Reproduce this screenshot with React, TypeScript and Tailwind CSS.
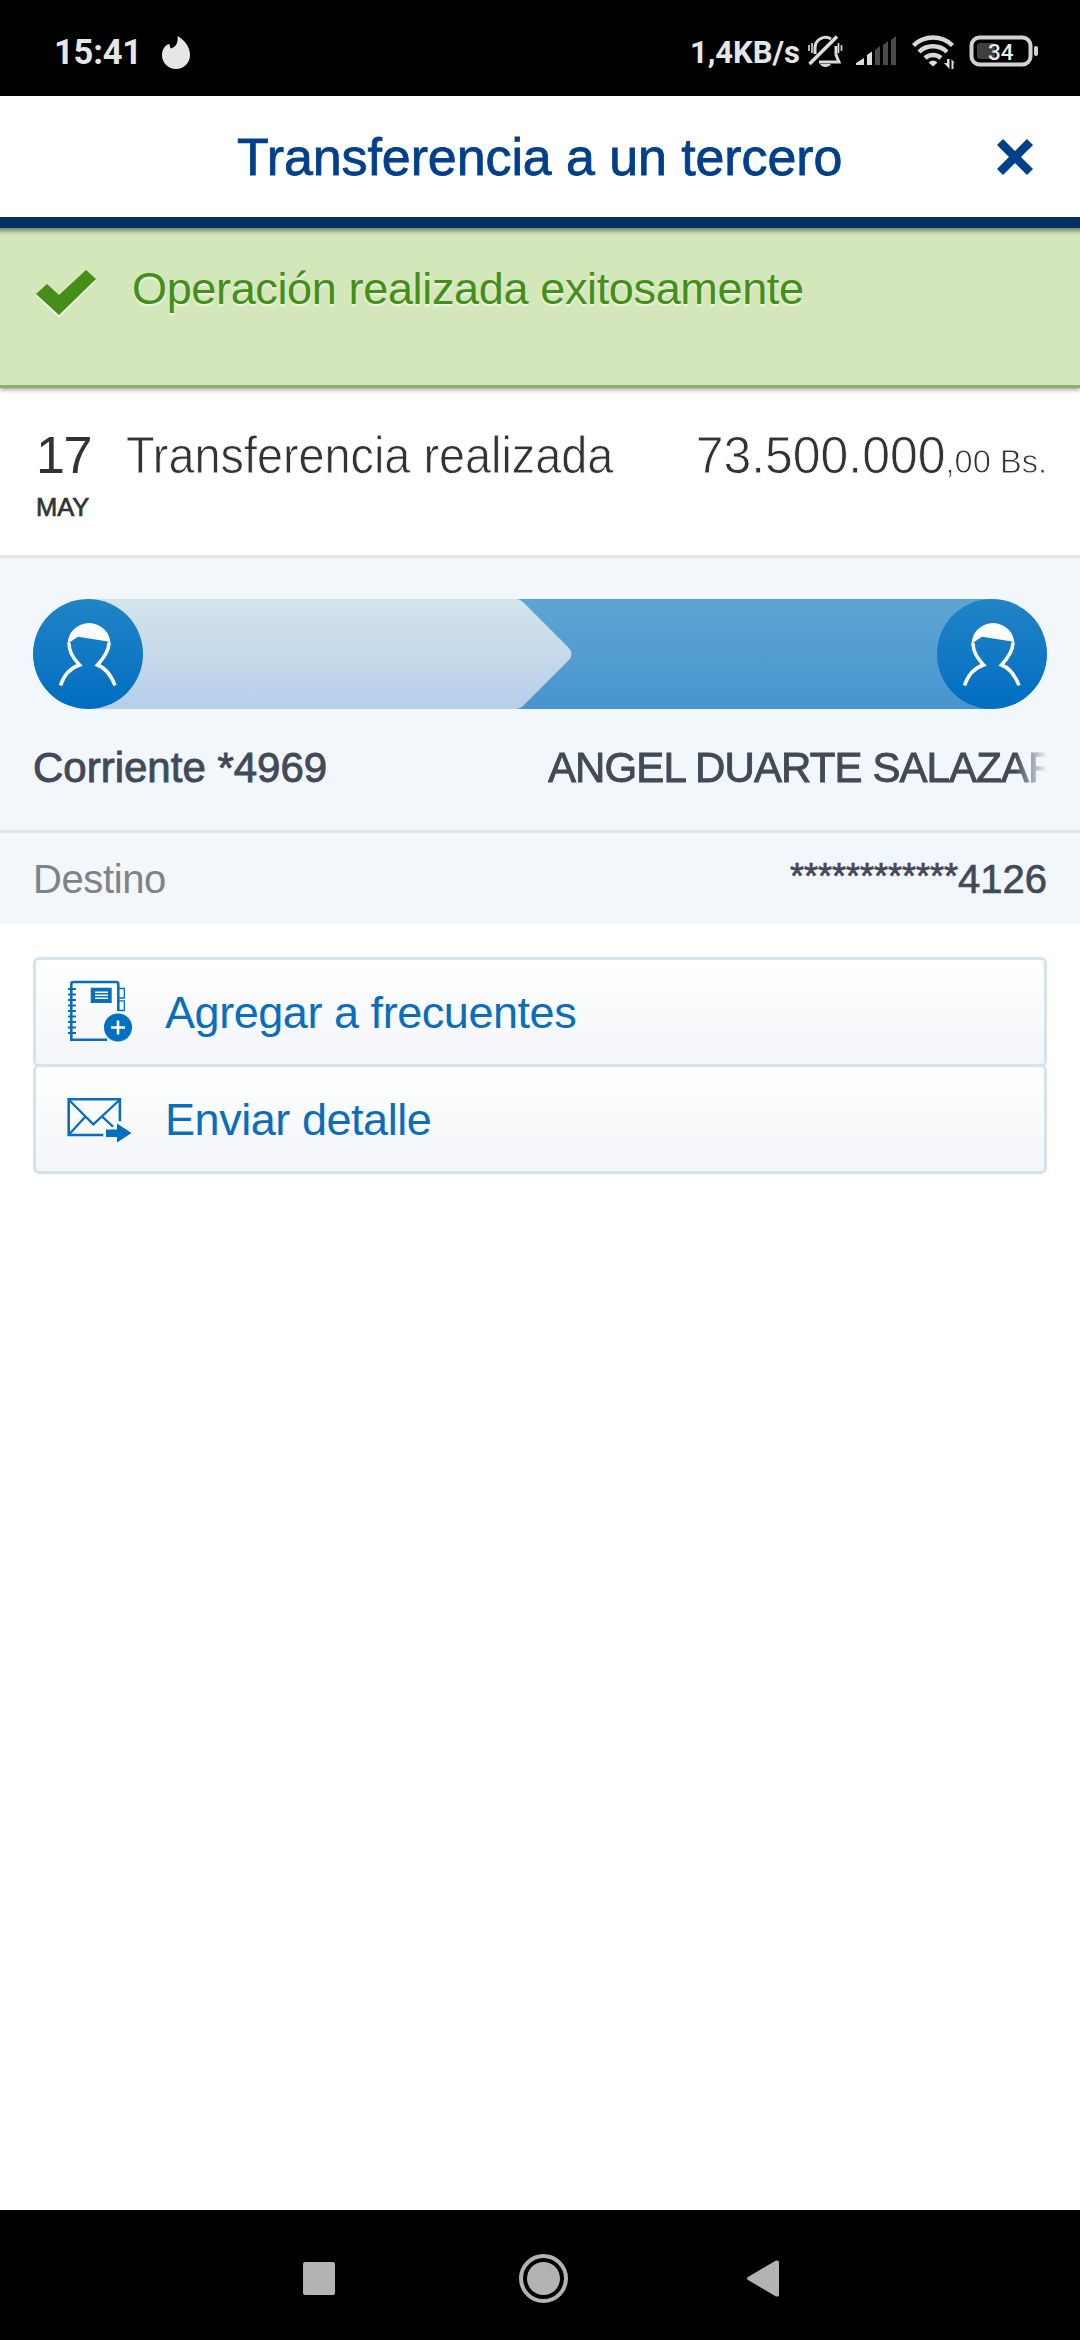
import React from 'react';

const FlameIcon = () => (
  <svg className="ml-[20px] h-[33px] w-[28px]" viewBox="0 0 28 33" fill="#e6e6e6">
    <path d="M15.500 0c0 0 12.500 6.500 12.500 19a14 14 0 0 1-28 0C0 14 3 9 7 8c1 0 .5 3 2 4.500C13 11 16.500 8 15.500 0z" />
  </svg>
);

const StatusIcons = () => (
  <svg className="h-[40px] w-[240px]" viewBox="806 32 240 40" fill="none">
    {/* muted bell */}
    <g stroke="#dcdcdc" strokeWidth="3">
      <path d="M815 54V48a10.500 10.500 0 0 1 16-9M836 46v9l3 7H819" />
      <path d="M809.500 64 837 36.500" strokeWidth="3.500" />
      <path d="M809 45v6M812 43v10M838.500 43v10M841.500 45v6" strokeWidth="1.600" />
    </g>
    <path d="M820 64h11c-2 4-9 4-11 0z" fill="#dcdcdc" />
    {/* signal */}
    <path d="M856 65v-2l8-5v7zM867 65V55l5-3.500V65z" fill="#dcdcdc" />
    <path d="M875 65V50l5-4v19zM883 65V45l5-4v24zM891 65V40l5-4v29z" fill="#4a4a4a" />
    {/* wifi */}
    <g stroke="#d8d8d8" strokeWidth="4.500">
      <path d="M913.500 45.500a28 28 0 0 1 39 0M919 52a20 20 0 0 1 28 0M925 58a12 12 0 0 1 16 0" />
    </g>
    <path d="M929 62a6 6 0 0 1 8 0v1l-4 3.500-4-3.500z" fill="#dcdcdc" />
    <path d="M949.500 59v10L944 63h3v-4zM951.500 69V59l3 4h-1v6z" fill="#dcdcdc" />
    {/* battery */}
    <rect x="971.500" y="37.500" width="59" height="27" rx="8" stroke="#d2d2d2" strokeWidth="4" />
    <rect x="977" y="43" width="18" height="16" rx="3" fill="#3f3f3f" />
    <rect x="1034" y="46" width="4" height="10" rx="2" fill="#d2d2d2" />
    <text x="988" y="60" fill="#ececec" fontSize="22.500" fontWeight="500" fontFamily="Roboto, sans-serif">34</text>
  </svg>
);

const PersonIcon = () => (
  <svg className="h-[110px] w-[110px]" viewBox="0 0 110 110" fill="none">
    <path d="M34.500 45.500A21.500 21.500 0 0 1 77.500 45.500L73.700 42.200 45 37.700 38.500 42z" fill="#fff" />
    <path
      d="M27.500 86.500C31 76 37 69 46.500 66 40 59 35.500 51 36.200 44M82 86.500C78 76 73 69 64.500 66 71.500 58 76.500 51 75.700 44"
      stroke="#fff"
      strokeWidth="3.500"
    />
  </svg>
);

const NotebookIcon = () => (
  <svg className="h-[70px] w-[66px]" viewBox="66 978 66 70" fill="none" stroke="#0a6ebd">
    <path d="M107 1040.700H71.300V985q0-2 2-2h43q2 0 2 2v27" strokeWidth="2.600" />
    <path
      d="M68 990h8M68 995.500h8M68 1001h8M68 1006.500h8M68 1012h8M68 1017.500h8M68 1023h8M68 1028.500h8M68 1034h8"
      strokeWidth="2.200"
    />
    <path d="M90.700 988.700h21V1004h-21z" fill="#0a6ebd" stroke="none" />
    <path d="M95 993.300h13M95 996.300h13M95 999.300h13" stroke="#fff" strokeWidth="1.500" />
    <path d="M119 989.500h5.300v9.500H119M119 1001.800h5.300v9.700H119" strokeWidth="1.300" />
    <circle cx="118" cy="1028.500" r="14" fill="#0070c0" stroke="none" />
    <path d="M111 1028.500h14M118 1021.500v14" stroke="#fff" strokeWidth="2.600" />
  </svg>
);

const MailIcon = () => (
  <svg className="h-[70px] w-[66px]" viewBox="66 1084 66 70" fill="none" stroke="#0a6ebd" strokeWidth="2.600">
    <path d="M103.300 1135H68.700v-35.700h51.200v22" />
    <path d="M69 1100 93.300 1124.300 119.500 1100M69 1134.500 85.500 1116.500M101.500 1116 113 1126.700" strokeWidth="2.300" />
    <path d="M106 1129.500h11V1123.500L131.500 1133 117 1142.500V1137h-11z" fill="#0070c0" stroke="none" />
  </svg>
);

const ActionRow = ({ icon, label }: { icon: React.ReactNode; label: string }) => (
  <button className="flex h-[110px] w-full items-center rounded-[6px] border-3 border-[#d4e4ea] bg-linear-to-b from-white to-[#f3f5f8] pl-[30px] text-left text-[45px] tracking-[-0.45px] text-[#0a6ebd]">
    {icon}
    <span className="ml-[33px]">{label}</span>
  </button>
);

export default function App() {
  return (
    <div className="flex h-[2340px] w-[1080px] flex-col overflow-hidden bg-white font-['Liberation_Sans',Arial,sans-serif] leading-none">
      <div className="flex h-24 items-center bg-black pt-[8px] pl-[54px] font-[Roboto,sans-serif] font-bold text-[#e6e6e6]">
        <span className="text-[34.500px] tracking-[-0.2px]">15:41</span>
        <FlameIcon />
        <span className="mr-[6px] ml-auto text-[31px]">1,4KB/s</span>
        <div className="mr-[34px]">
          <StatusIcons />
        </div>
      </div>

      <header className="flex h-[132px] items-center border-b-11 border-[#042f61] pr-[46px] pl-[237px] text-[#00408a]">
        <h1 className="text-[52px] tracking-[-0.1px] [-webkit-text-stroke:0.8px_#00408a]">Transferencia a un tercero</h1>
        <svg className="ml-auto h-[38px] w-[38px]" viewBox="0 0 38 38" stroke="#00408a" strokeWidth="8.500">
          <path d="M4 4 34 34M34 4 4 34" />
        </svg>
      </header>

      <section className="flex h-[160px] items-start border-b-3 border-[#8cae6a] bg-[#d4e7bb] pt-[32px] pl-[36px] shadow-[inset_0_8px_4px_-5px_rgba(0,0,0,0.45),0_2px_4px_rgba(0,0,0,0.35)]">
        <svg className="mt-[9px] h-[50px] w-[60px]" viewBox="0 0 60 50">
          <path d="M0 27 11 17 23 28 50 3 60 12 23 49z" fill="#fff" opacity="0.6" />
          <path d="M0 25 11 15 23 26 50 1 60 10 23 46z" fill="#448f17" />
        </svg>
        <p className="ml-[36px] pt-[6px] text-[45px] tracking-[-0.35px] text-[#448f17] [text-shadow:0_2px_2px_rgba(255,255,255,0.7)]">Operación realizada exitosamente</p>
      </section>

      <section className="flex h-[170px] border-b-3 border-[#e4e5e6] pt-[41px] pr-[33px] pl-[36px] text-[#333]">
        <div className="w-[90px]">
          <div className="text-[52px] tracking-[-1.500px]">17</div>
          <div className="mt-[14px] text-[25.500px] [-webkit-text-stroke:0.7px_#333]">MAY</div>
        </div>
        <div className="w-[500px] origin-left scale-x-[0.9] text-[52px] whitespace-nowrap [-webkit-text-stroke:0.8px_white]">Transferencia realizada</div>
        <div className="ml-auto flex origin-right scale-x-[0.96] items-baseline text-[52px] whitespace-nowrap [-webkit-text-stroke:0.8px_white]">
          73.500.000<span className="text-[34px]">,00 Bs.</span>
        </div>
      </section>

      <section className="h-[275px] border-b-3 border-[#e4e5e6] bg-[#f1f7fb] px-[33px] pt-[41px]">
        <div className="relative flex h-[110px] justify-between overflow-hidden rounded-full bg-linear-to-b from-[#5ca5d3] to-[#4894cf]">
          <svg className="absolute inset-0 h-[110px] w-[540px]" viewBox="0 0 540 110">
            <defs>
              <linearGradient id="origin" x1="0" y1="0" x2="0" y2="1">
                <stop offset="0" stopColor="#d3e5e9" />
                <stop offset="1" stopColor="#b8cee9" />
              </linearGradient>
            </defs>
            <path d="M40 0H483Q487 0 490 3L535 48Q542 55 535 62L490 107Q487 110 483 110H40z" fill="url(#origin)" />
          </svg>
          <div className="relative rounded-full bg-linear-to-b from-[#2084c6] to-[#006dc1]">
            <PersonIcon />
          </div>
          <div className="relative rounded-full bg-linear-to-b from-[#2084c6] to-[#006dc1]">
            <PersonIcon />
          </div>
        </div>
        <div className="mt-[38px] flex text-[42px] text-[#434a57] [-webkit-text-stroke:0.9px_#434a57]">
          <span className="w-[515px] shrink-0">Corriente *4969</span>
          <span className="w-[532px] shrink-0 tracking-[-0.9px] whitespace-nowrap [mask-image:linear-gradient(to_right,#000_468px,transparent_499px)]">ANGEL DUARTE SALAZAR</span>
        </div>
      </section>

      <section className="flex h-[91px] items-center justify-between bg-[#f1f7fb] px-[33px] text-[40px]">
        <span className="tracking-[-0.4px] text-[#808286]">Destino</span>
        <span className="flex text-[#434a57] [-webkit-text-stroke:0.7px_#434a57]">
          <span className="text-[36px]">************</span>
          <span>4126</span>
        </span>
      </section>

      <section className="flex flex-1 flex-col px-[33px] pt-[33px]">
        <ActionRow icon={<NotebookIcon />} label="Agregar a frecuentes" />
        <div className="-mt-[3px]">
          <ActionRow icon={<MailIcon />} label="Enviar detalle" />
        </div>
      </section>

      <nav className="flex h-[130px] items-center bg-black pt-[7px] pl-[303px]">
        <div className="h-[33px] w-[32px] rounded-[2px] bg-[#b3b3b3]" />
        <div className="ml-[184px] flex h-[49px] w-[49px] items-center justify-center rounded-full border-4 border-[#b3b3b3]">
          <div className="h-[33px] w-[33px] rounded-full bg-[#b3b3b3]" />
        </div>
        <svg className="ml-[179px] h-[37px] w-[32px]" viewBox="0 0 32 37" fill="#b3b3b3">
          <path d="M1 17 29 .500Q32 0 32 2v33q0 2-3 1.500L1 20q-2-1.500 0-3z" />
        </svg>
      </nav>
    </div>
  );
}
